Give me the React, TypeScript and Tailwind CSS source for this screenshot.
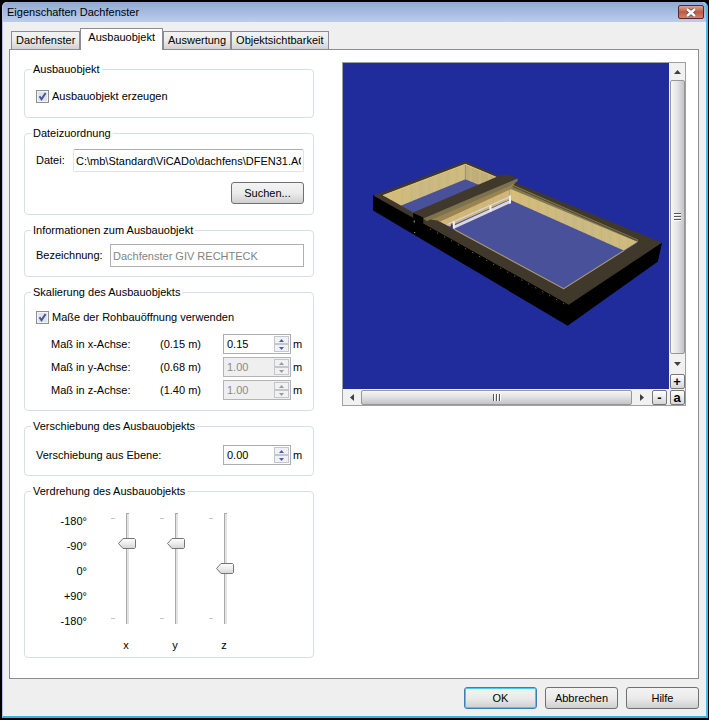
import { useState } from "react";
import type { ReactNode } from "react";
import clsx from "clsx";

const TABS = ["Dachfenster", "Ausbauobjekt", "Auswertung", "Objektsichtbarkeit"];

const AXES = [
  { id: "x", raw: "(0.15 m)", value: "0.15", disabled: false },
  { id: "y", raw: "(0.68 m)", value: "1.00", disabled: true },
  { id: "z", raw: "(1.40 m)", value: "1.00", disabled: true },
];

function Group({ title, className, children }: { title: string; className?: string; children: ReactNode }) {
  return (
    <fieldset className="rounded border border-[#d5dfe5]">
      <legend className="ml-[6px] px-[2px] leading-4">{title}</legend>
      <div className={clsx("pr-[9px] pl-[11px]", className)}>{children}</div>
    </fieldset>
  );
}

function CheckBox({ label }: { label: string }) {
  const [checked, setChecked] = useState(true);
  return (
    <label className="flex items-center gap-[3px] leading-4">
      <span className="relative h-[13px] w-[13px]">
        <input
          type="checkbox"
          checked={checked}
          onChange={(e) => setChecked(e.target.checked)}
          className="block h-[13px] w-[13px] appearance-none border border-[#8e8f8f] bg-[#dfe3ea] shadow-[inset_0_0_0_1px_#f4f4f4]"
        />
        {checked && (
          <svg viewBox="0 0 13 13" className="pointer-events-none absolute inset-0 h-[13px] w-[13px]">
            <path d="M3.5 6.2 L5.5 9.2 L9.6 3" fill="none" stroke="#4557a0" strokeWidth="2" />
          </svg>
        )}
      </span>
      {label}
    </label>
  );
}

function Spinner({ id, initial, disabled }: { id: string; initial: string; disabled?: boolean }) {
  const [value, setValue] = useState(initial);
  const step = (d: number) => setValue((Number(value) + d).toFixed(2));
  const fill = disabled ? "#9a9a9a" : "#4a5cb8";
  return (
    <span
      className={clsx(
        "flex h-5 w-[68px] border p-px",
        disabled ? "border-[#b4b4b4] bg-[#efefef]" : "border-[#abadb3] bg-white"
      )}
    >
      <input
        id={id}
        value={value}
        disabled={disabled}
        onChange={(e) => setValue(e.target.value)}
        className="w-0 flex-1 bg-transparent pl-[2px] outline-none disabled:text-[#8a8a8a]"
      />
      <span className="flex w-[15px] flex-col">
        <button
          type="button"
          aria-label="Erhöhen"
          disabled={disabled}
          onClick={() => step(0.01)}
          className="flex flex-1 items-center justify-center border border-[#c3c6cc] bg-[#f1f1f1]"
        >
          <svg viewBox="0 0 5 3" className="h-[3px] w-[5px]"><path d="M0 3 L2.5 0 L5 3Z" fill={fill} /></svg>
        </button>
        <button
          type="button"
          aria-label="Verringern"
          disabled={disabled}
          onClick={() => step(-0.01)}
          className="flex flex-1 items-center justify-center border border-[#c3c6cc] bg-[#f1f1f1]"
        >
          <svg viewBox="0 0 5 3" className="h-[3px] w-[5px]"><path d="M0 0 L2.5 3 L5 0Z" fill={fill} /></svg>
        </button>
      </span>
    </span>
  );
}

function AxisSlider({ axis, initial }: { axis: string; initial: number }) {
  const [angle, setAngle] = useState(initial);
  // track runs from -180 (top) to +180 (bottom)
  const y = Math.round(55 + (angle / 180) * 50);
  return (
    <label className="flex w-7 flex-col items-center">
      <span className="relative block h-[111px] w-7">
        <svg viewBox="0 0 28 111" className="h-[111px] w-7">
          <defs>
            <linearGradient id={`thumb-${axis}`} x1="0" y1="0" x2="0" y2="1">
              <stop offset="0" stopColor="#ffffff" />
              <stop offset="0.5" stopColor="#ececec" />
              <stop offset="1" stopColor="#d4d4d4" />
            </linearGradient>
          </defs>
          <path d="M1 5.5h4M1 105.5h4" stroke="#c4c4c4" />
          <rect x="16" y="0" width="3" height="111" fill="#e3e3e3" />
          <path d="M16.5 0V111M16 .5H19" stroke="#a9a9a9" />
          <path
            d={`M8.5 ${y + 0.5} L13 ${y - 4.5} H24.5 L25.5 ${y - 3.5} V${y + 4.5} L24.5 ${y + 5.5} H13 Z`}
            fill={`url(#thumb-${axis})`}
            stroke="#757575"
          />
        </svg>
        <input
          type="range"
          min={-180}
          max={180}
          value={angle}
          onChange={(e) => setAngle(Number(e.target.value))}
          className="absolute inset-0 h-full w-full opacity-0 [writing-mode:vertical-lr]"
        />
      </span>
      <span className="mt-[13px] pl-1 leading-4">{axis}</span>
    </label>
  );
}

function RoofWindowModel() {
  return (
    <svg viewBox="343 64 325 325" className="block aspect-square w-full bg-[#202c9c]">
      <defs>
        <linearGradient id="wood" x1="0" y1="0" x2="1" y2="0">
          <stop offset="0" stopColor="#d8bd75" />
          <stop offset="0.5" stopColor="#c8b983" />
          <stop offset="1" stopColor="#cfbb7c" />
        </linearGradient>
        <pattern id="grain" width="9" height="40" patternUnits="userSpaceOnUse">
          <path d="M2.5 0V40" stroke="#d9b98a" strokeWidth="1" opacity=".7" />
          <path d="M6.5 0V40" stroke="#b9b077" strokeWidth="1" opacity=".5" />
        </pattern>
      </defs>
      {/* outer sides and top of the frame */}
      <path d="M373 195 L568 304 L661 243 L657 262 L567 326 L373 211Z" fill="#000" />
      <path d="M373 196 L465 162 L509 181 L661 243 L568 305Z" fill="#40382a" />
      {/* small opening */}
      <path d="M383 196 L465 165 L496 178 L480 188 L413 213Z" fill="#4a519b" />
      <path d="M383 196 L465 165 L465 180 L401 206Z" fill="url(#wood)" />
      <path d="M383 196 L465 165 L465 180 L401 206Z" fill="url(#grain)" />
      <path d="M465 165 L496 178 L480 186 L465 180Z" fill="#bfae77" />
      <path d="M465 165 L496 178 L480 186 L465 180Z" fill="url(#grain)" />
      <path d="M383 196 L465 165 L496 178" fill="none" stroke="#e2c77c" strokeWidth="1" />
      <path d="M465 165V180" stroke="#9c8c5c" strokeWidth=".7" />
      {/* large opening */}
      <path d="M437 221 L509 188 L637 243 L563 289Z" fill="#4a519b" />
      <path d="M437 221 L509 188 L509 200 L449 227Z" fill="#d0b777" />
      <path d="M437 221 L509 188 L509 200 L449 227Z" fill="url(#grain)" />
      <path d="M509 188 L637 242 L623 251 L509 200Z" fill="url(#wood)" />
      <path d="M509 188 L637 242 L623 251 L509 200Z" fill="url(#grain)" />
      <path d="M509 184 L637 240 L637 242.500 L509 189Z" fill="#82774f" />
      <path d="M511 186.500 L636 241" stroke="#50472f" strokeWidth="1" />
      <path d="M453 229.500 L563 289 L623 251" fill="none" stroke="#b29d68" strokeWidth="1" />
      {/* cross bar */}
      <path d="M423 219 L517 180 L510 190 L440 222 L432 221Z" fill="#9a8350" />
      <path d="M422 218 L517 179 L517 182 L508 187 L427 222Z" fill="#7b7250" />
      <path d="M413 213 L500 176 L507 175 L517 179 L423 219Z" fill="#40382a" />
      <path d="M413 213.500 L423 218 L423 224 L413 219Z" fill="#000" />
      <path d="M424 223 L430 220 L437 221 L455 231 L447 236Z" fill="#40382a" />
      {/* vent handle */}
      <path d="M453 228 L510 202" stroke="#d9d9df" strokeWidth="3" />
      <path d="M447 225 L510 197" stroke="#d9d9e6" strokeWidth="1.200" />
      <path d="M453.500 222V229M490 206V212M509.500 196V204" stroke="#efeff2" strokeWidth="2" />
      <path d="M451.500 224V228" stroke="#222" strokeWidth="1" />
      <path d="M414 221v2M414 233h1" stroke="#b9ab74" strokeWidth="1" />
      <path d="M430 229.500l136 76" stroke="#b9ab74" strokeWidth=".8" strokeDasharray="1 7" />
    </svg>
  );
}

const zoomButton =
  "flex h-[15px] w-[15px] items-center justify-center rounded-[2px] border border-[#777] bg-linear-to-b from-white to-[#d6d6d6] text-[13px] leading-3 font-bold";

function Preview() {
  return (
    <div className="grid grid-cols-[1fr_16px] border border-[#a0a0a0]">
      <RoofWindowModel />
      <div className="flex flex-col items-center bg-[#f1f1f1]">
        <button type="button" aria-label="Nach oben" className="flex h-[17px] w-full items-center justify-center">
          <svg viewBox="0 0 7 4" className="h-1 w-[7px]"><path d="M0 4 L3.5 0 L7 4Z" fill="#404040" /></svg>
        </button>
        <div className="flex w-[15px] flex-1 flex-col items-center justify-center gap-px rounded-[2px] border border-[#979797] bg-linear-to-r from-[#f6f6f6] via-[#e4e4e6] to-[#c4c4c8]">
          {[0, 1, 2].map((i) => (
            <i key={i} className="h-[2px] w-[7px] border-t border-[#555] bg-white" />
          ))}
        </div>
        <button type="button" aria-label="Nach unten" className="flex h-5 w-full items-center justify-center">
          <svg viewBox="0 0 7 4" className="h-1 w-[7px]"><path d="M0 0 L3.5 4 L7 0Z" fill="#404040" /></svg>
        </button>
        <button type="button" className={zoomButton}>+</button>
      </div>
      <div className="flex h-4 items-center bg-[#f1f1f1] pt-px">
        <button type="button" aria-label="Nach links" className="flex h-full w-[18px] items-center justify-center">
          <svg viewBox="0 0 4 7" className="h-[7px] w-1"><path d="M4 0 L0 3.5 L4 7Z" fill="#404040" /></svg>
        </button>
        <div className="flex h-[15px] flex-1 items-center justify-center gap-px rounded-[2px] border border-[#979797] bg-linear-to-b from-[#f6f6f6] via-[#e0e0e2] to-[#c4c4c8]">
          {[0, 1, 2].map((i) => (
            <i key={i} className="h-[7px] w-[2px] border-l border-[#555] bg-white" />
          ))}
        </div>
        <button type="button" aria-label="Nach rechts" className="flex h-full w-5 items-center justify-center">
          <svg viewBox="0 0 4 7" className="h-[7px] w-1"><path d="M0 0 L4 3.5 L0 7Z" fill="#404040" /></svg>
        </button>
        <button type="button" className={clsx(zoomButton, "mr-[2px]")}>-</button>
      </div>
      <div className="flex h-4 items-center justify-center bg-[#f1f1f1] pt-px">
        <button type="button" className={zoomButton}>a</button>
      </div>
    </div>
  );
}

const pushButton =
  "h-[22px] w-[73px] rounded-[3px] border bg-linear-to-b from-[#f3f3f3] from-0% via-[#ebebeb] via-50% to-[#cfcfcf]";

export default function App() {
  const [tab, setTab] = useState("Ausbauobjekt");

  return (
    <div className="min-h-screen bg-black font-['Liberation_Sans',Arial,sans-serif] text-[11px] text-black">
      <div className="flex min-h-screen flex-col py-[2px] pr-px pl-[2px]">
        <div className="flex flex-1 flex-col rounded-t-[5px] border-r-2 border-b-2 border-l border-r-[#45bde8] border-b-[#2fb4ea] border-l-[#b4c6e4] bg-[#efefef]">
          <header className="flex h-5 items-center justify-between rounded-t-[5px] bg-linear-to-b from-[#90a9d6] to-[#bccdea] pl-1">
            <h1 className="leading-4">Eigenschaften Dachfenster</h1>
            <button
              type="button"
              aria-label="Schließen"
              className="mr-[2px] flex h-[14px] w-[26px] items-center justify-center rounded-[2px] border border-[#5c2626] bg-linear-to-b from-[#dba596] via-[#bd5a43] to-[#cf8468]"
            >
              <svg viewBox="0 0 12 9" className="h-[9px] w-3">
                <path d="M2 1 L10 8 M10 1 L2 8" stroke="#5d4a52" strokeWidth="4" />
                <path d="M2 1 L10 8 M10 1 L2 8" stroke="#fff" strokeWidth="2.400" />
              </svg>
            </button>
          </header>

          <main className="flex flex-1 flex-col pt-[6px] pr-[7px] pl-[6px]">
            <nav role="tablist" className="flex items-end pl-[2px]">
              {TABS.map((name) => (
                <button
                  key={name}
                  type="button"
                  role="tab"
                  aria-selected={tab === name}
                  onClick={() => setTab(name)}
                  className={clsx(
                    "border border-[#898c95]",
                    tab === name
                      ? "relative -mb-px h-[22px] border-b-0 bg-white px-[7px] pb-1"
                      : "h-[18px] border-b-0 bg-linear-to-b from-[#f2f2f2] via-[#ebebeb] to-[#d2d2d2] px-1"
                  )}
                >
                  {name}
                </button>
              ))}
            </nav>

            <section className="flex flex-1 items-start gap-7 border border-[#898c95] bg-white pt-[11px] pr-3 pb-5 pl-[14px]">
              <div className="flex w-[290px] shrink-0 flex-col gap-[7px]">
                <Group title="Ausbauobjekt" className="pt-[11px] pb-[13px]">
                  <CheckBox label="Ausbauobjekt erzeugen" />
                </Group>

                <Group title="Dateizuordnung" className="flex flex-col gap-[10px] pt-2 pb-[10px]">
                  <label className="flex items-center justify-between">
                    Datei:
                    <input
                      defaultValue="C:\mb\Standard\ViCADo\dachfens\DFEN31.ACIS"
                      className="h-[23px] w-[231px] rounded-[2px] border border-[#e2e3ea] border-t-[#abadb3] px-[2px]"
                    />
                  </label>
                  <button type="button" className={clsx(pushButton, "self-end border-[#707070]")}>Suchen...</button>
                </Group>

                <Group title="Informationen zum Ausbauobjekt" className="pt-[6px] pb-[9px]">
                  <label className="flex items-center justify-between">
                    Bezeichnung:
                    <input
                      disabled
                      defaultValue="Dachfenster GIV RECHTECK"
                      className="h-[23px] w-[194px] border border-[#afafaf] bg-white px-[2px] text-[#838383]"
                    />
                  </label>
                </Group>

                <Group title="Skalierung des Ausbauobjekts" className="pt-[9px] pb-[10px]">
                  <CheckBox label="Maße der Rohbauöffnung verwenden" />
                  <div className="mt-[9px] flex flex-col gap-[3px] pl-[15px]">
                    {AXES.map((axis) => (
                      <div key={axis.id} className="flex h-5 items-center">
                        <label htmlFor={`size-${axis.id}`} className="w-[109px]">Maß in {axis.id}-Achse:</label>
                        <span className="w-[63px]">{axis.raw}</span>
                        <Spinner id={`size-${axis.id}`} initial={axis.value} disabled={axis.disabled} />
                        <span className="w-3 pl-[2px]">m</span>
                      </div>
                    ))}
                  </div>
                </Group>

                <Group title="Verschiebung des Ausbauobjekts" className="pt-[11px] pb-[10px]">
                  <div className="flex items-center">
                    <label htmlFor="offset" className="w-[187px]">Verschiebung aus Ebene:</label>
                    <Spinner id="offset" initial="0.00" />
                    <span className="w-3 pl-[2px]">m</span>
                  </div>
                </Group>

                <Group title="Verdrehung des Ausbauobjekts" className="flex gap-[23px] pt-[14px] pb-1">
                  <div className="flex w-[51px] flex-col gap-[9px] text-right leading-4">
                    <span>-180°</span>
                    <span>-90°</span>
                    <span>0°</span>
                    <span>+90°</span>
                    <span>-180°</span>
                  </div>
                  <div className="flex gap-[21px]">
                    <AxisSlider axis="x" initial={-90} />
                    <AxisSlider axis="y" initial={-90} />
                    <AxisSlider axis="z" initial={0} />
                  </div>
                </Group>
              </div>

              <div className="min-w-0 flex-1 pt-px">
                <Preview />
              </div>
            </section>

            <footer className="flex justify-end gap-2 pt-2 pb-[7px]">
              <button type="button" className={clsx(pushButton, "border-[#3c7fb1] shadow-[inset_0_0_0_1px_#48c8f5]")}>OK</button>
              <button type="button" className={clsx(pushButton, "border-[#707070]")}>Abbrechen</button>
              <button type="button" className={clsx(pushButton, "border-[#707070]")}>Hilfe</button>
            </footer>
          </main>
        </div>
      </div>
    </div>
  );
}
